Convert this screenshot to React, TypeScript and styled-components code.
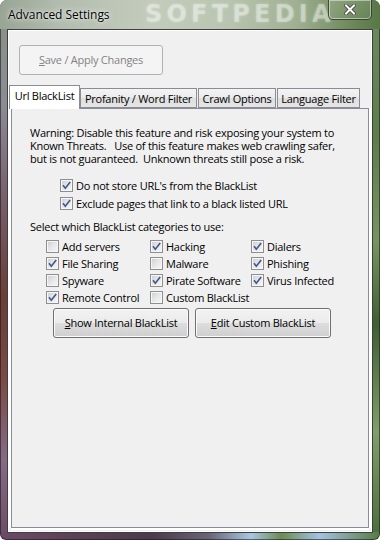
import React from "react";
import styled, { createGlobalStyle } from "styled-components";

const UI_FONT = `"Open Sans", "Noto Sans", "Liberation Sans", sans-serif`;

const GlobalStyle = createGlobalStyle`
  html, body { margin: 0; padding: 0; background: #ffffff; }
  body { font-family: ${UI_FONT}; }
  * { box-sizing: border-box; }
`;

const Window = styled.div`
  position: relative;
  width: 380px;
  height: 540px;
  display: flex;
  flex-direction: column;
  border-radius: 7px 7px 6px 6px;
  overflow: hidden;
  box-shadow: inset 0 0 0 1px rgba(20, 20, 20, 0.55);
  background:
    linear-gradient(to right, #6c4a68 0%, #5e4256 18%, #4b3a4a 40%, #6a6478 55%, #a9c6e4 66%, #6d8b52 74%, #a4c2e2 84%, #587a42 100%) left bottom / 100% 8px no-repeat,
    linear-gradient(to bottom, #889484 0%, #8b8b95 20%, #7a6270 35%, #6a3d38 55%, #7b4a44 70%, #866a86 85%, #6b4c66 100%) left top / 8px 100% no-repeat,
    linear-gradient(to bottom, #6d8a62 0%, #5e7d4d 25%, #77935f 45%, #3f5f34 60%, #7f9e6a 80%, #4a6a3c 100%) right top / 8px 100% no-repeat,
    #7a8a74;
`;

const TitleBar = styled.div`
  position: relative;
  height: 29px;
  flex: none;
  display: flex;
  align-items: flex-start;
  justify-content: space-between;
  padding: 0 8px 0 8px;
  background: linear-gradient(to right, #98a494 0%, #b2bcae 15%, #c3ccbc 40%, #b9c5b0 60%, #9fb092 78%, #6f8a5d 92%, #587646 100%);
`;

const Title = styled.div`
  font-family: ${UI_FONT};
  font-size: 12px;
  letter-spacing: -0.05px;
  line-height: 16px;
  margin-top: 7px;
  color: #000;
  text-shadow: 0 0 6px rgba(255, 255, 255, 0.9), 0 0 2px rgba(255, 255, 255, 0.8);
  position: relative;
  z-index: 1;
`;

const Watermark = styled.div`
  position: absolute;
  left: 145px;
  top: 1px;
  line-height: 27px;
  font-family: "DejaVu Sans", sans-serif;
  font-weight: bold;
  font-size: 24px;
  letter-spacing: 4.2px;
  color: rgba(255, 255, 255, 0.32);
  text-shadow: 0 0 3px rgba(255, 255, 255, 0.3);
  pointer-events: none;
`;

const CloseButton = styled.div`
  width: 44px;
  height: 20px;
  display: flex;
  align-items: center;
  justify-content: center;
  border: 1px solid rgba(35, 45, 35, 0.75);
  border-top: none;
  border-radius: 0 0 5px 5px;
  background: linear-gradient(to bottom, rgba(255, 255, 255, 0.12), rgba(255, 255, 255, 0.05));
  box-shadow: inset 0 0 0 1px rgba(255, 255, 255, 0.45);
  position: relative;
  z-index: 1;
`;

const Client = styled.div`
  flex: 1;
  margin: 0 7px 7px 7px;
  border: 1px solid #3d3f3d;
  background: #f0f0f0;
  box-shadow: inset 0 0 0 1px #ffffff;
  display: flex;
  flex-direction: column;
  padding: 15px 3px 4px 3px;
`;

const Button = styled.button<{ $w: number }>`
  width: ${(p) => p.$w}px;
  height: 30px;
  flex: none;
  padding: 0;
  border: 1px solid #707070;
  border-radius: 3px;
  background: linear-gradient(to bottom, #f2f2f2 0%, #ebebeb 50%, #dddddd 51%, #cfcfcf 100%);
  box-shadow: inset 0 0 0 1px #fbfbfb;
  font-family: ${UI_FONT};
  font-size: 11px;
  letter-spacing: -0.25px;
  color: #000;
  line-height: 14px;
  cursor: default;

  &:disabled {
    border-color: #adb2b5;
    background: #f4f4f4;
    box-shadow: none;
    color: #838383;
  }
`;

const SaveRow = styled.div`
  display: flex;
  padding-left: 8px;
`;

const TabControl = styled.div`
  flex: 1;
  display: flex;
  flex-direction: column;
  margin-top: 10px;
`;

const TabStrip = styled.div`
  display: flex;
  align-items: flex-end;
  height: 23px;
  gap: 1px;
  position: relative;
  z-index: 2;
`;

const Tab = styled.div<{ $w: number; $active?: boolean }>`
  width: ${(p) => p.$w}px;
  height: ${(p) => (p.$active ? 24 : 20)}px;
  margin: ${(p) => (p.$active ? "0 -1px -1px -2px" : "0")};
  border: 1px solid #898c95;
  border-bottom: ${(p) => (p.$active ? "none" : "1px solid #898c95")};
  background: ${(p) => (p.$active ? "#ffffff" : "linear-gradient(to bottom, #f3f3f3 0%, #ebebeb 50%, #dedede 51%, #e6e6e6 100%)")};
  font-family: ${UI_FONT};
  font-size: 11px;
  letter-spacing: -0.25px;
  color: #000;
  display: flex;
  justify-content: center;
  align-items: ${(p) => (p.$active ? "flex-start" : "center")};
  padding-top: ${(p) => (p.$active ? "2px" : "0")};
  white-space: nowrap;
  position: relative;
  z-index: ${(p) => (p.$active ? 2 : 1)};
`;

const Page = styled.div`
  flex: 1;
  border: 1px solid #898c95;
  background: #f0f0f0;
  box-shadow: -2px 0 0 #ffffff, 2px 0 0 #ffffff, 0 2px 0 #ffffff;
  display: flex;
  flex-direction: column;
  padding: 17px 0 0 18px;
  position: relative;
`;

const Text = styled.div`
  font-family: ${UI_FONT};
  font-size: 11px;
  letter-spacing: -0.25px;
  line-height: 13px;
  color: #000;
  white-space: pre;
`;

const Warning = styled(Text)``;

const Options = styled.div`
  display: flex;
  flex-direction: column;
  margin: 11px 0 0 30px;
`;

const CheckRow = styled.label<{ $h: number }>`
  display: flex;
  align-items: center;
  gap: 3px;
  height: ${(p) => p.$h}px;
  font-family: ${UI_FONT};
  font-size: 11px;
  letter-spacing: -0.25px;
  color: #000;
  white-space: nowrap;
`;

const Prompt = styled(Text)`
  margin-top: 8px;
`;

const Grid = styled.div`
  display: grid;
  grid-template-columns: 104px 101px auto;
  grid-auto-rows: 17px;
  margin: 5px 0 0 16px;
`;

const ButtonRow = styled.div`
  display: flex;
  gap: 6px;
  margin: 2px 0 0 23px;
`;

const Box = styled.span`
  width: 13px;
  height: 13px;
  flex: none;
  border: 1px solid #8e8f8f;
  background: linear-gradient(135deg, #c9ccd1 0%, #e4e5e7 45%, #f7f7f8 100%);
  box-shadow: inset 0 0 0 1px #f6f6f6;
  display: flex;
  align-items: center;
  justify-content: center;
`;

function Check({ checked, label, h = 17 }: { checked: boolean; label: string; h?: number }) {
  return (
    <CheckRow $h={h}>
      <Box>
        {checked && (
          <svg width="11" height="11" viewBox="0 0 11 11">
            <path d="M2 5.2 L4.3 8.2 L9.2 2" fill="none" stroke="#425689" strokeWidth="1.6" />
          </svg>
        )}
      </Box>
      <span>{label}</span>
    </CheckRow>
  );
}

const categories: [string, boolean][] = [
  ["Add servers", false],
  ["Hacking", true],
  ["Dialers", true],
  ["File Sharing", true],
  ["Malware", false],
  ["Phishing", true],
  ["Spyware", false],
  ["Pirate Software", true],
  ["Virus Infected", true],
  ["Remote Control", true],
  ["Custom BlackList", false],
];

export default function App() {
  return (
    <>
      <GlobalStyle />
      <Window>
        <TitleBar>
          <Title>Advanced Settings</Title>
          <Watermark>SOFTPEDIA</Watermark>
          <CloseButton>
            <svg width="12" height="11" viewBox="0 0 12 11">
              <path d="M2 1.5 L10 9.5 M10 1.5 L2 9.5" stroke="#3a3f3a" strokeWidth="3.6" strokeLinecap="square" />
              <path d="M2 1.5 L10 9.5 M10 1.5 L2 9.5" stroke="#ffffff" strokeWidth="2" strokeLinecap="square" />
            </svg>
          </CloseButton>
        </TitleBar>
        <Client>
          <SaveRow>
            <Button $w={144} disabled>
              <u>S</u>ave / Apply Changes
            </Button>
          </SaveRow>
          <TabControl>
            <TabStrip>
              <Tab $w={71} $active>Url BlackList</Tab>
              <Tab $w={117}>Profanity / Word Filter</Tab>
              <Tab $w={78}>Crawl Options</Tab>
              <Tab $w={83}>Language Filter</Tab>
            </TabStrip>
            <Page>
              <Warning>
                {"Warning: Disable this feature and risk exposing your system to\nKnown Threats.   Use of this feature makes web crawling safer,\nbut is not guaranteed.  Unknown threats still pose a risk."}
              </Warning>
              <Options>
                <Check checked h={18} label="Do not store URL's from the BlackList" />
                <Check checked h={18} label="Exclude pages that link to a black listed URL" />
              </Options>
              <Prompt>Select which BlackList categories to use:</Prompt>
              <Grid>
                {categories.map(([label, checked]) => (
                  <Check key={label} checked={checked} label={label} />
                ))}
              </Grid>
              <ButtonRow>
                <Button $w={136}>
                  <u>S</u>how Internal BlackList
                </Button>
                <Button $w={136}>
                  <u>E</u>dit Custom BlackList
                </Button>
              </ButtonRow>
            </Page>
          </TabControl>
        </Client>
      </Window>
    </>
  );
}
